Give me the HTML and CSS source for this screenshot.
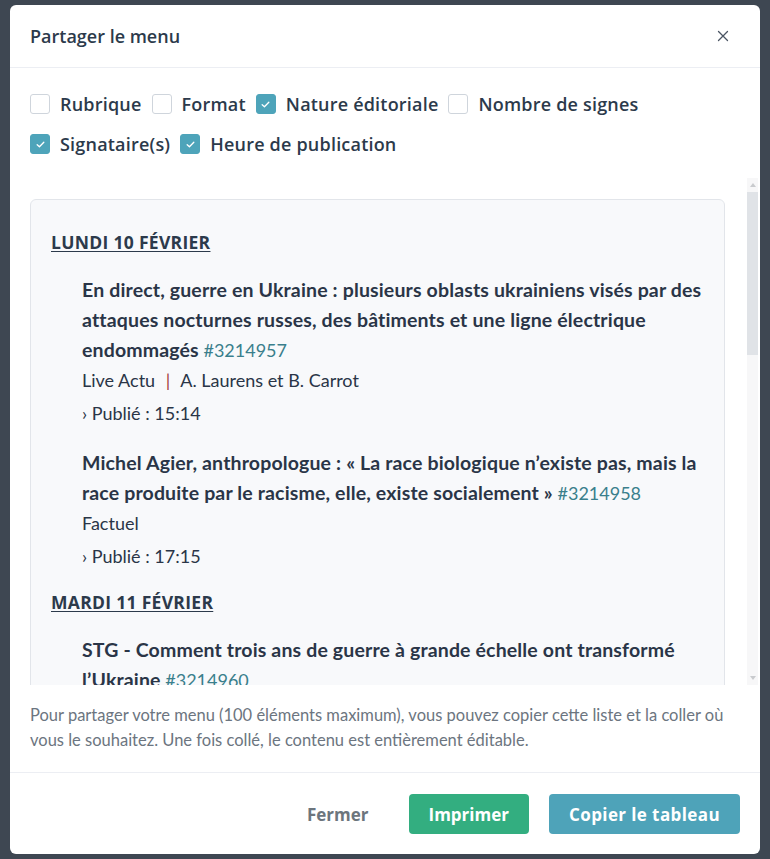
FILE: index.html
```html
<!DOCTYPE html>
<html lang="fr">
<head>
<meta charset="utf-8">
<title>Partager le menu</title>
<link rel="stylesheet" href="styles.css">
</head>
<body>
<div class="backdrop">
  <div class="modal">
    <header class="modal-header">
      <h2 class="modal-title">Partager le menu</h2>
      <button class="close" aria-label="Fermer">
        <svg viewBox="0 0 12 12" width="12" height="12"><path d="M1.5 1.5L10.5 10.5M10.5 1.5L1.5 10.5" stroke="#4b5563" stroke-width="1.3" fill="none" stroke-linecap="round"/></svg>
      </button>
    </header>

    <div class="options">
      <div class="opt-row">
        <label class="opt"><span class="box"></span>Rubrique</label>
        <label class="opt"><span class="box"></span>Format</label>
        <label class="opt"><span class="box on"><svg viewBox="0 0 10 8" width="9" height="7"><path d="M1.2 4.2L3.8 6.6L8.8 1.4" stroke="#fff" stroke-width="1.5" fill="none" stroke-linecap="round" stroke-linejoin="round"/></svg></span>Nature éditoriale</label>
        <label class="opt"><span class="box"></span>Nombre de signes</label>
      </div>
      <div class="opt-row">
        <label class="opt"><span class="box on"><svg viewBox="0 0 10 8" width="9" height="7"><path d="M1.2 4.2L3.8 6.6L8.8 1.4" stroke="#fff" stroke-width="1.5" fill="none" stroke-linecap="round" stroke-linejoin="round"/></svg></span>Signataire(s)</label>
        <label class="opt"><span class="box on"><svg viewBox="0 0 10 8" width="9" height="7"><path d="M1.2 4.2L3.8 6.6L8.8 1.4" stroke="#fff" stroke-width="1.5" fill="none" stroke-linecap="round" stroke-linejoin="round"/></svg></span>Heure de publication</label>
      </div>
    </div>

    <div class="scroll-area">
      <div class="scroll-content">
        <div class="sheet">
          <h3 class="day">Lundi 10 février</h3>
          <div class="item">
            <p class="title"><strong>En direct, guerre en Ukraine : plusieurs oblasts ukrainiens visés par des attaques nocturnes russes, des bâtiments et une ligne électrique endommagés</strong> <span class="ref">#3214957</span></p>
            <p class="meta">Live Actu <span class="sep">|</span> A. Laurens et B. Carrot</p>
            <p class="pub">› Publié : 15:14</p>
          </div>
          <div class="item">
            <p class="title"><strong>Michel Agier, anthropologue : « La race biologique n’existe pas, mais la race produite par le racisme, elle, existe socialement »</strong> <span class="ref">#3214958</span></p>
            <p class="meta">Factuel</p>
            <p class="pub">› Publié : 17:15</p>
          </div>
          <h3 class="day">Mardi 11 février</h3>
          <div class="item">
            <p class="title"><strong>STG - Comment trois ans de guerre à grande échelle ont transformé l’Ukraine</strong> <span class="ref">#3214960</span></p>
            <p class="meta">Analyse</p>
            <p class="pub">› Publié : 09:30</p>
          </div>
        </div>
      </div>
      <div class="scrollbar">
        <span class="arrow up"></span>
        <span class="thumb"></span>
        <span class="track-rest"></span>
        <span class="arrow down"></span>
      </div>
    </div>

    <p class="note">Pour partager votre menu (100 éléments maximum), vous pouvez copier cette liste et la coller où vous le souhaitez. Une fois collé, le contenu est entièrement éditable.</p>

    <footer class="modal-footer">
      <button class="btn btn-link">Fermer</button>
      <button class="btn btn-green">Imprimer</button>
      <button class="btn btn-teal">Copier le tableau</button>
    </footer>
  </div>
</div>
</body>
</html>
```

FILE: styles.css
```css
* { box-sizing: border-box; }

html, body {
  margin: 0;
  padding: 0;
}

body {
  background: #3e4752;
  font-family: Lato, "Liberation Sans", sans-serif;
  width: 770px;
  height: 859px;
  overflow: hidden;
}

.backdrop {
  padding: 5px 10px;
}

.modal {
  width: 750px;
  height: 849px;
  background: #fff;
  border-radius: 6px;
  display: flex;
  flex-direction: column;
  overflow: hidden;
}

/* header */
.modal-header {
  flex: none;
  height: 63px;
  display: flex;
  align-items: center;
  justify-content: space-between;
  padding: 0 31px 0 20px;
  border-bottom: 1px solid #eceef3;
}

.modal-title {
  margin: 0;
  font-family: "Open Sans", "Liberation Sans", sans-serif;
  font-size: 18px;
  font-weight: 600;
  color: #2c3a4b;
}

.close {
  border: 0;
  background: none;
  padding: 0;
  width: 12px;
  height: 12px;
  display: flex;
  cursor: pointer;
}

/* options */
.options {
  flex: none;
  padding: 26px 20px 24px;
  display: flex;
  flex-direction: column;
  gap: 20px;
}

.opt-row {
  display: flex;
  align-items: center;
  gap: 10px;
  height: 20px;
}

.opt {
  display: flex;
  align-items: center;
  gap: 10px;
  font-family: "Open Sans", "Liberation Sans", sans-serif;
  font-size: 18px;
  font-weight: 600;
  letter-spacing: 0.2px;
  color: #2c3a4b;
  white-space: nowrap;
}

.box {
  width: 20px;
  height: 20px;
  flex: none;
  border: 1px solid #cfd5dc;
  border-radius: 3px;
  background: #fff;
  display: flex;
  align-items: center;
  justify-content: center;
}

.box.on {
  background: #4ea4ba;
  border-color: #4ea4ba;
}

/* scroll area */
.scroll-area {
  flex: none;
  height: 507px;
  display: flex;
  padding-right: 2px;
}

.scroll-content {
  flex: 1;
  overflow: hidden;
  padding: 21px 22px 0 20px;
}

.sheet {
  background: #f8f9fb;
  border: 1px solid #e2e5ea;
  border-radius: 6px;
  padding: 30px 10px 30px 20px;
  color: #2a3547;
}

.day {
  margin: 19px 0 0;
  font-family: "Open Sans", "Liberation Sans", sans-serif;
  font-size: 17.5px;
  line-height: 24px;
  font-weight: 700;
  letter-spacing: 0.3px;
  text-transform: uppercase;
  text-decoration: underline;
  text-underline-offset: 2px;
  color: #2c3a4b;
}

.day:first-child { margin-top: 0; }

.item {
  margin-top: 20px;
  padding-left: 31px;
}

.day + .item { margin-top: 21px; }

.item p {
  margin: 0;
  font-size: 18px;
  line-height: 30px;
}

.item .title strong {
  font-weight: 700;
  font-size: 19.5px;
  letter-spacing: 0.15px;
}

.ref { color: #3a7f8c; }

.sep {
  color: #a4393b;
  margin: 0 6px;
}

.item .pub { margin-top: 3px; }

/* fake scrollbar */
.scrollbar {
  flex: none;
  width: 11px;
  display: flex;
  flex-direction: column;
  background: #f7f7f8;
}

.arrow {
  flex: none;
  height: 14px;
  display: flex;
  justify-content: center;
  align-items: center;
}

.arrow.up::before {
  content: "";
  border-left: 3px solid transparent;
  border-right: 3px solid transparent;
  border-bottom: 4px solid #c9cbce;
}

.arrow.down::before {
  content: "";
  border-left: 3px solid transparent;
  border-right: 3px solid transparent;
  border-top: 4px solid #c9cbce;
}

.thumb {
  flex: none;
  height: 163px;
  background: #e0e3e7;
}

.track-rest { flex: 1; }

/* note */
.note {
  flex: none;
  margin: 0;
  padding: 18px 20px 19px;
  font-size: 16.5px;
  line-height: 25px;
  color: #6c7580;
}

/* footer */
.modal-footer {
  flex: 1;
  border-top: 1px solid #eceef3;
  padding: 21px 20px 0;
  display: flex;
  justify-content: flex-end;
  align-items: flex-start;
  gap: 20px;
}

.btn {
  height: 40px;
  padding: 0 20px;
  border: 0;
  border-radius: 4px;
  font-family: "Open Sans", "Liberation Sans", sans-serif;
  font-size: 17px;
  font-weight: 700;
  cursor: pointer;
}

.btn-link {
  background: none;
  color: #6c757d;
}

.btn-green {
  background: #33ae80;
  color: #fff;
}

.btn-teal {
  background: #4ea3b9;
  color: #fff;
  letter-spacing: 0.4px;
}
```
